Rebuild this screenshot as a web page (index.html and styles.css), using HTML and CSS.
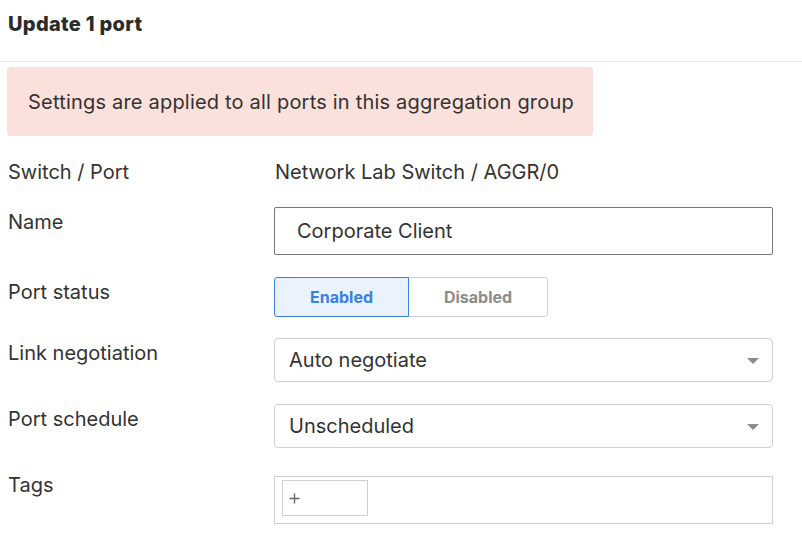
FILE: index.html
```html
<!DOCTYPE html>
<html lang="en">
<head>
  <meta charset="UTF-8">
  <meta name="viewport" content="width=device-width, initial-scale=1.0">
  <title>Update 1 port</title>
  <link rel="stylesheet" href="styles.css">
</head>
<body>
  <header class="panel-header">
    <h1>Update 1 port</h1>
  </header>

  <div class="notice">Settings are applied to all ports in this aggregation group</div>

  <form class="port-form">
    <div class="row">
      <label class="label">Switch / Port</label>
      <div class="value">Network Lab Switch / AGGR/0</div>
    </div>

    <div class="row">
      <label class="label" for="name">Name</label>
      <input class="text-input" id="name" type="text" value="Corporate Client">
    </div>

    <div class="row">
      <label class="label">Port status</label>
      <div class="toggle">
        <button type="button" class="toggle-btn active">Enabled</button>
        <button type="button" class="toggle-btn">Disabled</button>
      </div>
    </div>

    <div class="row">
      <label class="label">Link negotiation</label>
      <div class="select">
        <span>Auto negotiate</span>
        <span class="caret"></span>
      </div>
    </div>

    <div class="row">
      <label class="label">Port schedule</label>
      <div class="select">
        <span>Unscheduled</span>
        <span class="caret"></span>
      </div>
    </div>

    <div class="row">
      <label class="label">Tags</label>
      <div class="tags">
        <div class="tag-add">
          <svg width="11" height="11" viewBox="0 0 11 11">
            <path d="M5.5 0.5v10M0.5 5.5h10" stroke="#666" stroke-width="1.4" fill="none"/>
          </svg>
        </div>
      </div>
    </div>
  </form>
</body>
</html>
```

FILE: styles.css
```css
html {
  --text: #333;
  --border: #cfcfcf;
  --blue: #3b80e4;
}

body {
  margin: 0;
  font-family: "Inter", "Noto Sans", sans-serif;
  font-size: 20px;
  color: var(--text);
  background: #fff;
}

.panel-header {
  height: 49px;
  padding: 12px 8px 0;
  border-bottom: 1px solid #e6e6e6;
}

.panel-header h1 {
  margin: 0;
  font-size: 20px;
  font-weight: 800;
  letter-spacing: 0.3px;
  color: #2b2b2b;
}

.notice {
  margin: 5px 0 0 7px;
  width: 586px;
  height: 69px;
  box-sizing: border-box;
  padding-left: 21px;
  display: flex;
  align-items: center;
  background: #fbe1dc;
  border-radius: 4px;
  letter-spacing: 0.2px;
}

.port-form {
  display: flex;
  flex-direction: column;
  gap: 22px;
  margin: 21px 0 0 8px;
}

.row {
  display: flex;
  align-items: flex-start;
}

.label,
.value {
  line-height: 26px;
  padding-top: 2px;
}

.label {
  width: 266px;
  flex: none;
}

.value {
  padding-left: 1px;
}

.text-input {
  width: 499px;
  height: 48px;
  box-sizing: border-box;
  border: 1px solid #777;
  border-radius: 2px;
  padding: 0 22px;
  font: inherit;
  color: var(--text);
  outline: none;
}

.toggle {
  display: flex;
  height: 40px;
  margin-bottom: -1px;
}

.toggle-btn {
  width: 140px;
  height: 40px;
  margin-left: -1px;
  padding: 0;
  border: 1px solid var(--border);
  border-radius: 0 3px 3px 0;
  background: #fff;
  font-family: inherit;
  font-size: 16px;
  font-weight: 700;
  color: #8c8c8c;
}

.toggle-btn.active {
  width: 135px;
  margin-left: 0;
  position: relative;
  z-index: 1;
  border-color: var(--blue);
  border-radius: 3px 0 0 3px;
  background: #eaf2fe;
  color: var(--blue);
}

.select {
  width: 499px;
  height: 44px;
  box-sizing: border-box;
  border: 1px solid var(--border);
  border-radius: 4px;
  padding: 0 13px 0 14px;
  display: flex;
  align-items: center;
  justify-content: space-between;
}

.caret {
  width: 0;
  height: 0;
  border-left: 6px solid transparent;
  border-right: 6px solid transparent;
  border-top: 6px solid #8c8c8c;
  margin-top: 2px;
}

.tags {
  margin-top: 6px;
  width: 499px;
  height: 48px;
  box-sizing: border-box;
  border: 1px solid var(--border);
  padding: 3px 7px;
}

.tag-add {
  width: 86px;
  height: 36px;
  box-sizing: border-box;
  border: 1px solid var(--border);
  padding-left: 6px;
  display: flex;
  align-items: center;
}
```
